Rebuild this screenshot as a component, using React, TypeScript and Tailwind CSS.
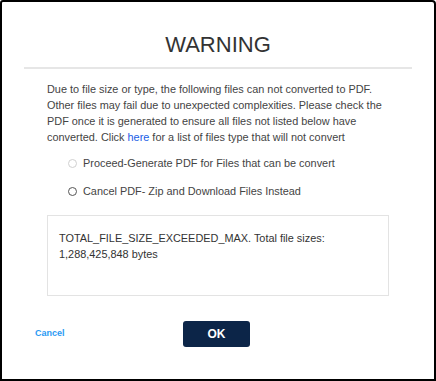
export default function App() {
  return (
    <div className="w-[436px] h-[381px] bg-white border-2 border-black rounded-tl-[3px] rounded-tr-[4px] overflow-hidden font-['Liberation_Sans',Arial,sans-serif] text-[#333]">
      <div className="pt-[30px] flex flex-col">
        <h1 className="text-center text-[22px] leading-[26px] text-[#333]">WARNING</h1>
        <div className="mx-[22px] mt-[9px] h-[2px] bg-[#e6e6e6]" />

        <p className="mx-[45px] mt-[12px] text-[10.9px] leading-[16px] text-[#444]">
          Due to file size or type, the following files can not converted to PDF. Other files may fail due to unexpected complexities. Please check the PDF once it is generated to ensure all files not listed below have converted. Click{" "}
          <a className="text-[#1a5ee6]">here</a> for a list of files type that will not convert
        </p>

        <div className="ml-[66px] mt-[10px] flex flex-col gap-[12px] text-[10.9px] text-[#444]">
          <label className="flex items-center h-[16px]">
            <span className="w-[9px] h-[9px] rounded-full border border-[#d0d0d0] mr-[6px]" />
            Proceed-Generate PDF for Files that can be convert
          </label>
          <label className="flex items-center h-[16px]">
            <span className="w-[9px] h-[9px] rounded-full border border-[#555] mr-[6px]" />
            Cancel PDF- Zip and Download Files Instead
          </label>
        </div>

        <div className="mx-[45px] mt-[16px] h-[81px] border border-[#e3e3e3] px-[11px] pt-[14px] text-[10.9px] leading-[16px] text-[#333]">
          TOTAL_FILE_SIZE_EXCEEDED_MAX. Total file sizes:
          <br />
          1,288,425,848 bytes
        </div>

        <div className="mt-[25px] flex items-center">
          <span className="ml-[33px] w-[148px] text-[9px] font-bold text-[#2b9af3]">Cancel</span>
          <button className="w-[67px] h-[26px] rounded-[3px] bg-[#0c2548] text-white text-[12px] font-bold">OK</button>
        </div>
      </div>
    </div>
  );
}
